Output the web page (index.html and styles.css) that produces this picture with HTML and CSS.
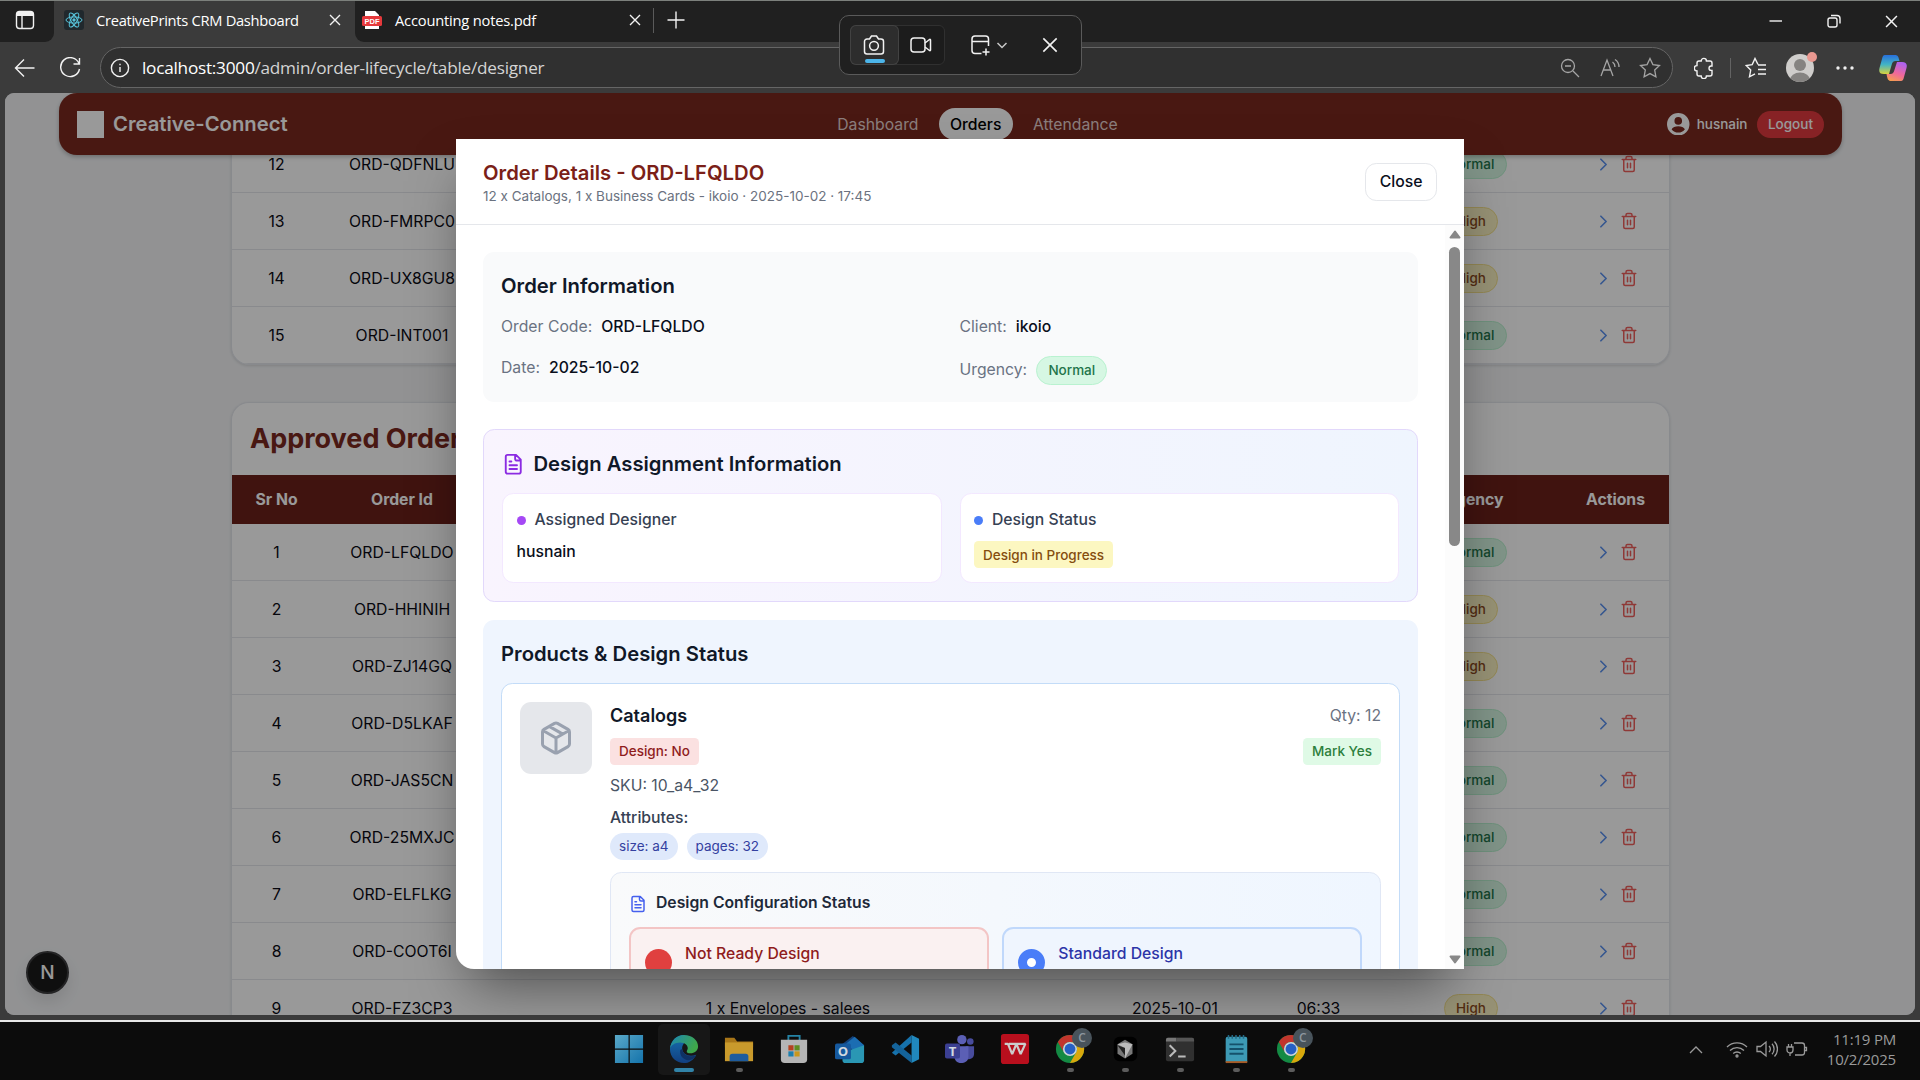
FILE: index.html
```html
<!DOCTYPE html>
<html lang="en">
<head>
<meta charset="utf-8">
<title>CreativePrints CRM Dashboard</title>
<link rel="stylesheet" href="styles.css">
</head>
<body>
<svg class="defs" aria-hidden="true">
  <symbol id="chevron" viewBox="0 0 24 24"><path d="m9 18 6-6-6-6"/></symbol>
  <symbol id="trash" viewBox="0 0 24 24"><path d="M3 6h18M19 6v14a2 2 0 0 1-2 2H7a2 2 0 0 1-2-2V6M8 6V4a2 2 0 0 1 2-2h4a2 2 0 0 1 2 2v2M10 11v6M14 11v6"/></symbol>
  <symbol id="file" viewBox="0 0 24 24"><path d="M15 2H6a2 2 0 0 0-2 2v16a2 2 0 0 0 2 2h12a2 2 0 0 0 2-2V7ZM14 2v4a2 2 0 0 0 2 2h4M10 9H8M16 13H8M16 17H8"/></symbol>
  <symbol id="cross" viewBox="0 0 12 12"><path d="M1 1l10 10M11 1 1 11"/></symbol>
  <symbol id="chrome" viewBox="0 0 32 32">
    <circle cx="16" cy="16" r="15" fill="#148a44"/>
    <path d="M3 8.5A15 15 0 0 1 29 8.5H16a7.500 7.500 0 0 0-6.500 11.200Z" fill="#c2352c"/>
    <path d="M29 8.500A15 15 0 0 1 16 31l6.500-11.300A7.500 7.500 0 0 0 16 8.500Z" fill="#d9a80c"/>
    <circle cx="16" cy="16" r="7.500" fill="#cfd4da"/><circle cx="16" cy="16" r="5.800" fill="#2560c4"/>
  </symbol>
</svg>

<header class="tabs">
  <div class="tabs-start"><svg class="line" width="20" height="20" viewBox="0 0 20 20"><rect x="1.500" y="1.500" width="17" height="17" rx="3"/><path d="M2 4h16" stroke-width="4"/><path d="M7 5v13"/></svg></div>
  <div class="tab active">
    <svg width="20" height="20" viewBox="0 0 20 20" fill="none" stroke="#58c4dc"><rect width="20" height="20" rx="3" fill="#20282d" stroke="none"/><ellipse cx="10" cy="10" rx="8" ry="3.100"/><ellipse cx="10" cy="10" rx="8" ry="3.100" transform="rotate(60 10 10)"/><ellipse cx="10" cy="10" rx="8" ry="3.100" transform="rotate(120 10 10)"/><circle cx="10" cy="10" r="1.200" fill="#58c4dc"/></svg>
    <span class="tab-title">CreativePrints CRM Dashboard</span>
    <svg class="line" width="12" height="12"><use href="#cross"/></svg>
  </div>
  <div class="tabs-rest">
    <svg width="20" height="20" viewBox="0 0 20 20"><path d="M3 1h10l4 4v14H3z" fill="#fff"/><rect y="6" width="20" height="10" rx="1.500" fill="#e5393c"/><text x="10" y="14" text-anchor="middle" class="pdf">PDF</text></svg>
    <span class="tab-title second">Accounting notes.pdf</span>
    <svg class="line" width="12" height="12"><use href="#cross"/></svg>
    <i class="tab-divider"></i>
    <svg class="line" width="18" height="18" viewBox="0 0 18 18"><path d="M9 0.500v17M.5 9h17"/></svg>
    <div class="window-controls">
      <svg class="line" width="14" height="14" viewBox="0 0 14 14"><path d="M.5 7h12.500"/></svg>
      <svg class="line" width="14" height="14" viewBox="0 0 14 14"><rect x="1" y="4" width="9" height="9" rx="2"/><path d="M4 1.500h6a3 3 0 0 1 3 3v5"/></svg>
      <svg class="line" width="13" height="13"><use href="#cross"/></svg>
    </div>
  </div>
</header>

<div class="toolbar">
  <svg class="line back" width="21" height="20" viewBox="0 0 21 20"><path d="M20.500 10H1.500M10 1.500 1.500 10l8.500 8.500"/></svg>
  <svg class="line reload" width="22" height="22" viewBox="0 0 22 22"><path d="M20 6.500A9.500 9.500 0 1 0 20.500 12M20.500 1v6h-6"/></svg>
  <div class="address">
    <svg class="line info" width="20" height="20" viewBox="0 0 20 20"><circle cx="10" cy="10" r="8.600"/><path d="M10 9v5M10 5.800v1.400"/></svg>
    <span class="url">localhost:3000<span class="path">/admin/order-lifecycle/table/designer</span></span>
    <div class="address-icons">
      <svg width="20" height="20" viewBox="0 0 20 20"><circle cx="8" cy="8" r="6.500"/><path d="M5 8h6M13 13l6 6"/></svg>
      <svg width="20" height="20" viewBox="0 0 20 20"><path d="M1 18 7 2l6 16M3.300 12h7.500M12.500 4a6 6 0 0 1 2.500 5M15 1.500a9 9 0 0 1 4 7.500"/></svg>
      <svg width="22" height="22" viewBox="0 0 22 22"><path d="m11 1.500 2.900 6.100 6.600.9-4.800 4.600 1.200 6.700L11 16.600l-5.900 3.200 1.200-6.700L1.500 8.500l6.600-.9Z"/></svg>
    </div>
  </div>
  <div class="toolbar-icons">
    <svg class="line" width="20" height="22" viewBox="0 0 20 22"><path d="M5 4h2.200a2.600 2.600 0 0 1 5.200 0H16a2 2 0 0 1 2 2v3h-.8a2.200 2.200 0 0 0 0 4.400h.8v3.600a2 2 0 0 1-2 2h-3.600a2.600 2.600 0 0 1-5.200 0H5a2 2 0 0 1-2-2v-3a2.700 2.700 0 0 1 0-5.400V6a2 2 0 0 1 2-2Z"/></svg>
    <i class="tool-divider"></i>
    <svg class="line" width="22" height="22" viewBox="0 0 22 22"><path d="M13 7.500 10 1.500 7.200 7.600l-6 .9 4.500 4.600-1.200 6.700 5.500-3M13 8h8M13 12.500h8M13 17h8"/></svg>
    <span class="avatar"><svg width="28" height="28" viewBox="0 0 28 28"><defs><clipPath id="av"><circle cx="14" cy="14" r="14"/></clipPath></defs><g clip-path="url(#av)"><path d="M0 0h28v28H0z" fill="#cfcdcb"/><circle cx="14" cy="11" r="6" fill="#858381"/><ellipse cx="14" cy="26" rx="10" ry="7.500" fill="#858381"/></g></svg><i></i></span>
    <svg class="dots" width="18" height="4" viewBox="0 0 18 4"><circle cx="2" cy="2" r="1.700"/><circle cx="9" cy="2" r="1.700"/><circle cx="16" cy="2" r="1.700"/></svg>
    <svg class="copilot" width="28" height="28" viewBox="0 0 28 28">
      <defs><linearGradient id="c1" x1="0" y1="0" x2="0" y2="1"><stop offset="0" stop-color="#2870dc"/><stop offset=".5" stop-color="#42b4c4"/><stop offset="1" stop-color="#d9d23c"/></linearGradient><linearGradient id="c2" x1="0.600" y1="0" x2="0.200" y2="1"><stop offset="0" stop-color="#ae62ee"/><stop offset=".55" stop-color="#f0689a"/><stop offset="1" stop-color="#f5a04c"/></linearGradient></defs>
      <path d="M6 1h10c3 0 3.500 2 4.500 6h-4c-2 0-3 1-3.600 3L10 20H5c-4 0-5.500-2-4.500-6L3 5c.6-2.400 1.200-4 3-4Z" fill="url(#c1)"/>
      <path d="M22 27H12c-3 0-3.500-2-4.500-7h4c2 0 3-1 3.600-3L18 8h5c4 0 5.500 2 4.500 6L25 23c-.6 2.400-1.200 4-3 4Z" fill="url(#c2)"/>
    </svg>
  </div>
</div>

<main class="viewport">
  <nav class="navbar">
    <div class="brand"><i></i>Creative-Connect</div>
    <div class="links"><a>Dashboard</a><a class="current">Orders</a><a>Attendance</a></div>
    <div class="account">
      <svg width="22.500" height="22.500" viewBox="0 0 22 22"><path fill="#fff" fill-rule="evenodd" d="M11 0a11 11 0 1 1 0 22 11 11 0 0 1 0-22Zm0 4a3.700 3.700 0 1 0 0 7.400A3.700 3.700 0 0 0 11 4Zm0 9c-3 0-5.500 1.200-6.500 2.800a8 8 0 0 0 13 0C16.500 14.200 14 13 11 13Z"/></svg>
      <span>husnain</span><b>Logout</b>
    </div>
  </nav>

  <section class="panel upper">
    <div class="row"><span>12</span><span>ORD-QDFNLU</span><span></span><span></span><span></span><span><em class="badge normal">Normal</em></span><span class="actions"><svg class="go"><use href="#chevron"/></svg><svg class="del"><use href="#trash"/></svg></span></div>
    <div class="row"><span>13</span><span>ORD-FMRPC0</span><span></span><span></span><span></span><span><em class="badge high">High</em></span><span class="actions"><svg class="go"><use href="#chevron"/></svg><svg class="del"><use href="#trash"/></svg></span></div>
    <div class="row"><span>14</span><span>ORD-UX8GU8</span><span></span><span></span><span></span><span><em class="badge high">High</em></span><span class="actions"><svg class="go"><use href="#chevron"/></svg><svg class="del"><use href="#trash"/></svg></span></div>
    <div class="row"><span>15</span><span>ORD-INT001</span><span></span><span></span><span></span><span><em class="badge normal">Normal</em></span><span class="actions"><svg class="go"><use href="#chevron"/></svg><svg class="del"><use href="#trash"/></svg></span></div>
  </section>

  <section class="panel lower">
    <h2>Approved Orders</h2>
    <div class="row head"><span>Sr No</span><span>Order Id</span><span></span><span></span><span></span><span>Urgency</span><span>Actions</span></div>
    <div class="row"><span>1</span><span>ORD-LFQLDO</span><span></span><span></span><span></span><span><em class="badge normal">Normal</em></span><span class="actions"><svg class="go"><use href="#chevron"/></svg><svg class="del"><use href="#trash"/></svg></span></div>
    <div class="row"><span>2</span><span>ORD-HHINIH</span><span></span><span></span><span></span><span><em class="badge high">High</em></span><span class="actions"><svg class="go"><use href="#chevron"/></svg><svg class="del"><use href="#trash"/></svg></span></div>
    <div class="row"><span>3</span><span>ORD-ZJ14GQ</span><span></span><span></span><span></span><span><em class="badge high">High</em></span><span class="actions"><svg class="go"><use href="#chevron"/></svg><svg class="del"><use href="#trash"/></svg></span></div>
    <div class="row"><span>4</span><span>ORD-D5LKAF</span><span></span><span></span><span></span><span><em class="badge normal">Normal</em></span><span class="actions"><svg class="go"><use href="#chevron"/></svg><svg class="del"><use href="#trash"/></svg></span></div>
    <div class="row"><span>5</span><span>ORD-JAS5CN</span><span></span><span></span><span></span><span><em class="badge normal">Normal</em></span><span class="actions"><svg class="go"><use href="#chevron"/></svg><svg class="del"><use href="#trash"/></svg></span></div>
    <div class="row"><span>6</span><span>ORD-25MXJC</span><span></span><span></span><span></span><span><em class="badge normal">Normal</em></span><span class="actions"><svg class="go"><use href="#chevron"/></svg><svg class="del"><use href="#trash"/></svg></span></div>
    <div class="row"><span>7</span><span>ORD-ELFLKG</span><span></span><span></span><span></span><span><em class="badge normal">Normal</em></span><span class="actions"><svg class="go"><use href="#chevron"/></svg><svg class="del"><use href="#trash"/></svg></span></div>
    <div class="row"><span>8</span><span>ORD-COOT6I</span><span></span><span></span><span></span><span><em class="badge normal">Normal</em></span><span class="actions"><svg class="go"><use href="#chevron"/></svg><svg class="del"><use href="#trash"/></svg></span></div>
    <div class="row"><span>9</span><span>ORD-FZ3CP3</span><span>1 x Envelopes - salees</span><span>2025-10-01</span><span>06:33</span><span><em class="badge high">High</em></span><span class="actions"><svg class="go"><use href="#chevron"/></svg><svg class="del"><use href="#trash"/></svg></span></div>
  </section>

  <div class="overlay">
    <div class="modal">
      <div class="modal-head">
        <div><h3>Order Details - ORD-LFQLDO</h3><p>12 x Catalogs, 1 x Business Cards - ikoio · 2025-10-02 · 17:45</p></div>
        <button>Close</button>
      </div>
      <div class="modal-main">
        <div class="modal-body">
          <section class="card info-card">
            <h4>Order Information</h4>
            <div class="two-col">
              <div class="field"><span>Order Code:</span><b>ORD-LFQLDO</b></div>
              <div class="field"><span>Client:</span><b>ikoio</b></div>
              <div class="field"><span>Date:</span><b>2025-10-02</b></div>
              <div class="field urgency"><span>Urgency:</span><em class="badge normal">Normal</em></div>
            </div>
          </section>
          <section class="card assign-card">
            <h4><svg class="file"><use href="#file"/></svg>Design Assignment Information</h4>
            <div class="two-col">
              <div class="tile"><div class="tile-label"><i class="purple"></i>Assigned Designer</div><b>husnain</b></div>
              <div class="tile"><div class="tile-label"><i class="blue"></i>Design Status</div><em class="tag yellow">Design in Progress</em></div>
            </div>
          </section>
          <section class="card product-card">
            <h4>Products &amp; Design Status</h4>
            <div class="product">
              <div class="thumb"><svg viewBox="0 0 24 24"><path d="M11 21.730a2 2 0 0 0 2 0l7-4A2 2 0 0 0 21 16V8a2 2 0 0 0-1-1.730l-7-4a2 2 0 0 0-2 0l-7 4A2 2 0 0 0 3 8v8a2 2 0 0 0 1 1.730ZM12 22V12M3.300 7 12 12l8.700-5M7.500 4.270l9 5.150"/></svg></div>
              <div class="details">
                <div class="between"><strong>Catalogs</strong><span class="qty">Qty: 12</span></div>
                <div class="between tags"><em class="tag red">Design: No</em><em class="tag green">Mark Yes</em></div>
                <div class="sku">SKU: 10_a4_32</div>
                <div class="attr">Attributes:</div>
                <div class="chips"><span>size: a4</span><span>pages: 32</span></div>
                <div class="config">
                  <h5><svg class="file"><use href="#file"/></svg>Design Configuration Status</h5>
                  <div class="options">
                    <div class="option not-ready"><i></i>Not Ready Design</div>
                    <div class="option standard"><i></i>Standard Design</div>
                  </div>
                </div>
              </div>
            </div>
          </section>
        </div>
        <div class="scrollbar">
          <svg width="12" height="9" viewBox="0 0 12 9"><path d="M6 1.500 10.500 7.500h-9Z"/></svg>
          <i></i>
          <svg class="down" width="12" height="9" viewBox="0 0 12 9"><path d="M6 7.500 1.500 1.500h9Z"/></svg>
        </div>
      </div>
    </div>
  </div>
  <div class="dev-badge">N</div>
</main>

<div class="window-edge"></div>

<footer class="taskbar">
  <div class="apps">
    <div class="app"><svg viewBox="0 0 32 32"><defs><linearGradient id="w" x2="1" y2="1"><stop stop-color="#5aa9c9"/><stop offset="1" stop-color="#1473ab"/></linearGradient></defs><path fill="url(#w)" d="M1 1h14.500v14.500H1zM16.800 1H31v14.500H16.800zM1 16.800h14.500V31H1zM16.800 16.800H31V31H16.800z"/></svg></div>
    <div class="app focused"><svg viewBox="0 0 32 32"><defs><linearGradient id="e1" x2="1" y2=".4"><stop stop-color="#1b86b8"/><stop offset="1" stop-color="#3fa84a"/></linearGradient><linearGradient id="e2" y1="0" y2="1" x2="0"><stop stop-color="#1671b0"/><stop offset="1" stop-color="#123f80"/></linearGradient></defs><path fill="url(#e2)" d="M1 16C2 7 8 1 16 1c4 7-2 9-2 14 0 7 8 10 15 7-3 6-8 9-13 9C8 31 1 25 1 16Z"/><path fill="url(#e1)" d="M1 16C2 6 9 1 16 1c9 0 15 6 15 12 0 5-4 7.500-8 7.500-3 0-4.500-1-4-2.500.5-1 1-1.500 1-3 0-3-3-6-8-6-6 0-10 3-11 7Z"/><path fill="#0f3163" d="M12 17c-1 6 3 10 8 11 4 .5 7-2 9-5-7 2-14 0-15-7Z"/></svg></div>
    <div class="app open"><svg viewBox="0 0 32 32"><path fill="#a87618" d="M1 4h10l3 4h17v6H1z"/><path fill="#c99a2c" d="M1 9h30v20H1z"/><path fill="#1e5c9e" d="M6 29v-5a3 3 0 0 1 3-3h14a3 3 0 0 1 3 3v5z"/></svg></div>
    <div class="app"><svg viewBox="0 0 32 32"><path d="M10 7V2h12v5" fill="none" stroke="#2483a5" stroke-width="2"/><path fill="#b5b5b5" d="M2 6h28v21a4 4 0 0 1-4 4H6a4 4 0 0 1-4-4z"/><path fill="#b5421f" d="M10 12h5.500v5.500H10z"/><path fill="#5f8d20" d="M16.500 12H22v5.500h-5.500z"/><path fill="#1c7fae" d="M10 18.500h5.500V24H10z"/><path fill="#c9971c" d="M16.500 18.500H22V24h-5.500z"/></svg></div>
    <div class="app"><svg viewBox="0 0 32 32"><path fill="#123f78" d="M6 12 19 2l12 10v8H6z"/><path fill="#1b6db2" d="m12 10 9-7 10 9-9 8z"/><path fill="#2a97b4" d="M8 20 31 12v16a3 3 0 0 1-3 3H11a3 3 0 0 1-3-3z"/><rect y="10" width="17" height="17" rx="2" fill="#16599e"/><text x="8.500" y="23.500" text-anchor="middle" class="app-letter">O</text></svg></div>
    <div class="app"><svg viewBox="0 0 32 32"><path fill="#1672ac" d="M23 1v8L6 23l-4-3 2-2Z"/><path fill="#14639a" d="m2 12 4-3 17 14v8L2 14Z"/><path fill="#2088bd" d="m23 1 8 4v22l-8 4Z"/></svg></div>
    <div class="app"><svg viewBox="0 0 32 32"><circle cx="18" cy="6" r="5" fill="#5b5fb5"/><circle cx="27" cy="8" r="3.500" fill="#484c9d"/><path fill="#484c9d" d="M22 13h9v8c0 4-3 6-7 6z"/><path fill="#5b5fb5" d="M10 13h15v11c0 5-4 7-8 7s-7-3-7-7z"/><rect y="10" width="16" height="16" rx="2" fill="#3b3f92"/><text x="8" y="23" text-anchor="middle" class="app-letter">T</text></svg></div>
    <div class="app"><svg viewBox="0 0 32 32"><rect x="1" width="30" height="32" rx="3" fill="#b80f1d"/><path d="M5 10.500h3.500l4.500 11 4.500-11 4.500 11 5-11H15M9.500 10.500h6" fill="none" stroke="#ccc" stroke-width="2.400" stroke-linejoin="bevel"/></svg></div>
    <div class="app open"><svg viewBox="0 0 32 32"><use href="#chrome"/></svg><i class="profile">C</i></div>
    <div class="app open"><svg viewBox="0 0 32 32"><rect x="4" y="3" width="25" height="26" rx="6" fill="#000"/><path fill="#777" d="m16 6 8 5v10l-8 5-8-5V11Z"/><path fill="#bbb" d="m8 11 8-2 8 2-8 15v-11Z"/><path fill="#222" d="m8 12 8 3v8Z"/></svg></div>
    <div class="app open"><svg viewBox="0 0 32 32"><rect x="1" y="4" width="30" height="25" rx="2" fill="#303030"/><path fill="#777" d="M1 8V6a2 2 0 0 1 2-2h9v4z"/><path fill="#555" d="M12 4h17a2 2 0 0 1 2 2v2H12z"/><path d="m5 12 6 6-6 6M14 24h8" fill="none" stroke="#bbb" stroke-width="2.200"/></svg></div>
    <div class="app open"><svg viewBox="0 0 32 32"><rect x="5" y="3" width="23" height="28" rx="2" fill="#3d9ab5"/><path fill="#a85b25" d="M5 29h23v2H5z"/><path d="M8 1v4M12 1v4M16 1v4M20 1v4M24 1v4" stroke="#236a86" stroke-width="1.600"/><path d="M9 11h15M9 16h15M9 21h15" stroke="#15516b" stroke-width="2"/></svg></div>
    <div class="app open"><svg viewBox="0 0 32 32"><use href="#chrome"/></svg><i class="profile">C</i></div>
  </div>
  <div class="tray">
    <svg width="14" height="9" viewBox="0 0 14 9"><path d="m1 8 6-6 6 6"/></svg>
    <svg class="wifi" width="22" height="18" viewBox="0 0 22 18"><path d="M1 7a14 14 0 0 1 20 0M4 10.500a10 10 0 0 1 14 0M7.200 13.500a5.500 5.500 0 0 1 7.600 0"/><circle cx="11" cy="16" r="1"/></svg>
    <svg class="volume" width="22" height="18" viewBox="0 0 22 18"><path d="M1 6.500h3.500L10 2v14l-5.500-4.500H1ZM13 6a4 4 0 0 1 0 6M16 3.800a7.500 7.500 0 0 1 0 10.400M18.500 1.500a11 11 0 0 1 0 15"/></svg>
    <svg class="battery" width="22" height="18" viewBox="0 0 22 18"><path d="M8 3H16a2.500 2.500 0 0 1 2.500 2.500v7A2.500 2.500 0 0 1 16 15H9M18.500 7.500h2v3h-2M1 7h6v3a3 3 0 0 1-6 0ZM2.500 4v3M5.500 4v3M4 13v3"/></svg>
    <div class="clock"><span>11:19 PM</span><span>10/2/2025</span></div>
  </div>
</footer>

<div class="snip">
  <div class="snip-modes">
    <div class="mode on"><svg width="22" height="22" viewBox="0 0 22 22"><path d="M7.500 3.500 8.500 2h5l1 1.500L15.500 5H18a2.500 2.500 0 0 1 2.500 2.500v10A2.500 2.500 0 0 1 18 20H4a2.500 2.500 0 0 1-2.500-2.500v-10A2.500 2.500 0 0 1 4 5h2.500Z"/><circle cx="11" cy="11.800" r="4.400"/></svg></div>
    <div class="mode"><svg width="22" height="22" viewBox="0 0 22 22"><rect x="1" y="4" width="14" height="14" rx="3"/><path d="m15 9 4.500-3.500c.5-.4 1-.1 1 .5v10c0 .6-.5.900-1 .5L15 13"/></svg></div>
  </div>
  <svg class="shape" width="22" height="22" viewBox="0 0 22 22"><path d="M18.500 12V5a3 3 0 0 0-3-3H5a3 3 0 0 0-3 3v11.500a3 3 0 0 0 3 3h6.500M2 7.500h16.500M16 14.500v7M12.500 18h7"/></svg>
  <svg class="caret" width="12" height="12" viewBox="0 0 12 12"><path d="m1.500 4 4.500 4.500L10.500 4"/></svg>
  <svg class="exit" width="16" height="16"><use href="#cross"/></svg>
</div>
</body>
</html>
```
FILE: styles.css
```css
/* App sizes are rem based: 1rem = 18px (browser zoom of 112.5%). */
html { font-size: 18px; }
* { box-sizing: border-box; }
body {
  margin: 0; width: 1920px; height: 1080px; overflow: hidden; position: relative;
  display: flex; flex-direction: column; background: #3b3b3b; color: #fff;
  font-family: "Open Sans", "Noto Sans", sans-serif;
}
h2, h3, h4, h5, p { margin: 0; }
em, i { font-style: normal; }
svg { display: block; flex: none; }
.defs { position: absolute; width: 0; height: 0; }
.line { fill: none; stroke: #f2f2f2; stroke-width: 1.4; }

/* Browser tabs */
.tabs { display: flex; height: 42px; border-top: 1px solid #7c807c; flex: none; }
.tabs-start { width: 54px; background: #202020; border-bottom-right-radius: 9px; padding: 9px 0 0 15px; }
.tab { display: flex; align-items: center; width: 301px; padding: 0 14px 3px 10px; }
.tab-title { font-size: 14.7px; line-height: 20px; margin-left: 12px; flex: 1; letter-spacing: -0.29px; white-space: nowrap; }
.tabs-rest { flex: 1; display: flex; align-items: center; background: #202020; border-bottom-left-radius: 9px; padding: 0 22px 3px 7px; }
.tab-title.second { flex: none; width: 234px; margin-left: 13px; letter-spacing: -0.2px; }
.pdf { font: 700 7.500px "Liberation Sans", sans-serif; fill: #fff; }
.tab-divider { width: 1px; height: 25px; background: #5a5a5a; margin: 0 13px 0 12px; }
.window-controls { margin-left: auto; display: flex; align-items: center; gap: 44px; padding-top: 2px; }

/* Browser toolbar */
.toolbar { height: 51px; flex: none; display: flex; align-items: center; padding: 0 13px 0 14px; }
.reload { margin-left: 24px; }
.address { display: flex; align-items: center; width: 1573px; height: 41px; margin-left: 19px; border: 1.500px solid #656565; border-radius: 21px; background: #303030; padding: 0 11px 0 9px; }
.url { font-size: 17.200px; line-height: 24px; margin-left: 12px; letter-spacing: -0.24px; white-space: nowrap; }
.path { color: #d4d4d4; }
.address-icons { margin-left: auto; display: flex; align-items: center; gap: 19.500px; fill: none; stroke: #a5a5a5; stroke-width: 1.300; }
.toolbar-icons { display: flex; align-items: center; margin-left: 21px; flex: 1; }
.tool-divider { width: 1px; height: 20px; background: #636363; margin: 0 14px 0 16px; }
.avatar { position: relative; margin-left: 19px; }
.avatar i { position: absolute; right: -3px; top: -2px; width: 10px; height: 10px; border-radius: 50%; background: #e99890; }
.dots { fill: #f0f0f0; margin-left: 22px; }
.copilot { margin-left: auto; }

/* Page */
.viewport {
  position: relative; width: 1910px; height: 922px; flex: none; margin-left: 5px; overflow: hidden;
  border-radius: 9px; background: #f3f4f6; color: #0a0a14; font: 400 0.875rem/1.25rem Inter, sans-serif;
}
.navbar {
  position: relative; z-index: 1; display: flex; align-items: center; width: 1783px; height: 62px; margin-left: 54px;
  padding: 0 1rem; border-radius: 1rem; background: #7b281e; color: #fff; box-shadow: 0 2px 4px rgba(0,0,0,.25);
}
.brand { display: flex; align-items: center; gap: 9px; font-size: 1.125rem; font-weight: 600; width: 749px; }
.brand i { width: 1.5rem; height: 1.5rem; background: #fff; }
.links { display: flex; gap: 0.5rem; }
.links a { padding: 5.500px 0.625rem 3.500px; border-radius: 1rem; color: #e6d2d0; }
.links a.current { background: #fff; color: #000; font-weight: 500; }
.account { margin-left: auto; display: flex; align-items: center; font-size: 0.75rem; font-weight: 500; }
.account span { margin: 0 9.500px 0 7px; }
.account b { background: #e23a3f; color: #fff; font-weight: 500; line-height: 27px; border-radius: 14px; padding: 0 11px; }
.panel { width: 1439px; margin-left: 226px; border: 1px solid #e3e6ec; background: #fff; box-shadow: 0 1px 3px rgba(0,0,0,.12); overflow: hidden; }
.panel.upper { margin-top: -19px; border-top: 0; border-radius: 0 0 1rem 1rem; }
.panel.lower { margin-top: 37px; border-bottom: 0; border-radius: 1rem 1rem 0 0; }
.panel h2 { height: 72px; line-height: 72px; padding-left: 18px; font-size: 1.5rem; font-weight: 700; color: #7b281e; }
.row { display: grid; grid-template-columns: 89px 162px 610px 164px 123px 182px 107px; align-items: center; height: 57px; border-bottom: 1px solid #e5e7eb; text-align: center; }
.row span { display: flex; justify-content: center; }
.row span:nth-child(-n+5), .row.head span { padding-top: 2px; }
.row.head { height: 49px; border: 0; background: #6b211a; color: #fff; font-weight: 700; }
.badge { padding: 0.25rem 0.625rem; border: 1px solid #b9f2d0; border-radius: 1rem; background: #d6f7e3; color: #22744a; font-size: 0.75rem; font-weight: 500; line-height: 1rem; }
.badge.high { background: #fcf3c4; border-color: #f5e28c; color: #8a4a1c; }
.actions { gap: 6.500px; align-items: center; }
.actions svg { width: 1rem; height: 1rem; fill: none; stroke-width: 2; stroke: #ee605d; stroke-linecap: round; stroke-linejoin: round; }
.actions .go { width: 21px; height: 21px; stroke: #5a90ee; stroke-width: 1.900; }
.dev-badge {
  position: absolute; left: 21px; bottom: 21px; width: 43px; height: 43px; border-radius: 50%;
  background: #1a1a1a; border: 2px solid #3c3c3e; color: #fff; font-size: 19px; font-weight: 500; line-height: 39px; text-align: center;
  box-shadow: 0 8px 16px rgba(0,0,0,.1);
}

/* Order modal */
.overlay { position: absolute; inset: 0; z-index: 2; background: rgba(0,0,0,.4); display: flex; align-items: center; justify-content: center; }
.modal { width: 56rem; height: 90%; display: flex; flex-direction: column; background: #fff; border-radius: 0 0 0 1rem; overflow: hidden; box-shadow: 0 28px 56px -14px rgba(0,0,0,.5); }
.modal-head { display: flex; align-items: center; justify-content: space-between; height: 86px; padding: 0 1.5rem; border-bottom: 1px solid #e5e7eb; }
.modal-head h3 { font-size: 1.125rem; line-height: 1.75rem; font-weight: 600; color: #7b1f18; }
.modal-head p { margin: -2px 0 1px; font-size: 0.75rem; line-height: 1rem; color: #6b7280; }
.modal-head button { font: 500 0.875rem/1.25rem Inter, sans-serif; color: #0a0f20; background: #fff; border: 1px solid #e5e7eb; border-radius: 0.625rem; padding: 7.750px 0.75rem 5.750px; }
.modal-main { flex: 1; min-height: 0; display: flex; }
.modal-body { flex: 1; padding: 1.5rem; }
.card { border-radius: 0.625rem; padding: 1rem; }
.card h4 { display: flex; align-items: center; font-size: 1.125rem; line-height: 1.75rem; font-weight: 600; color: #101828; margin-bottom: 0.75rem; }
.card b { font-weight: 500; color: #0a0f1c; }
.two-col { display: grid; grid-template-columns: 1fr 1fr; gap: 1rem; }
.info-card { background: #f9fafb; height: 150px; margin-bottom: 1.5rem; }
.field { display: flex; align-items: center; gap: 0.5rem; height: 22.500px; padding-top: 2px; color: #6a7282; }
.field.urgency { height: 29px; padding: 0; }
.assign-card { border: 1px solid #e2d8fb; background: linear-gradient(90deg, #f9f4fe, #eff5fe); margin-bottom: 1rem; }
.file { width: 1.25rem; height: 1.25rem; margin-right: 0.5rem; fill: none; stroke: #8b2be2; stroke-width: 2; stroke-linecap: round; stroke-linejoin: round; }
.tile { height: 89.500px; background: #fff; border: 1px solid #f3e8ff; border-radius: 0.625rem; padding: 14.700px 0.75rem 0; }
.tile-label { display: flex; align-items: center; gap: 0.5rem; margin-bottom: 9.500px; color: #364153; font-weight: 500; }
.tile-label i { width: 0.5rem; height: 0.5rem; border-radius: 50%; background: #a548f5; }
.tile-label .blue { background: #4a7df8; }
.tag { display: block; width: max-content; border-radius: 0.25rem; padding: 0.25rem 0.5rem; font-size: 0.75rem; line-height: 1rem; font-weight: 500; }
.tag.yellow { background: #fcf7c1; color: #854d0e; margin-top: 9.800px; }
.tag.red { background: #fbe1e1; color: #8f1c1c; }
.tag.green { background: #dffae6; color: #2c7f3c; }
.product-card { background: #eff5fe; border-radius: 0.625rem 0.625rem 0 0; }
.product { display: flex; gap: 1rem; height: 400px; padding: 1rem; background: #fff; border: 1px solid #c3dcf8; border-radius: 0.625rem; }
.thumb { width: 4rem; height: 4rem; border-radius: 0.625rem; background: #e5e7eb; display: flex; align-items: center; justify-content: center; flex: none; }
.thumb svg { width: 2rem; height: 2rem; fill: none; stroke: #99a1af; stroke-width: 2; stroke-linecap: round; stroke-linejoin: round; }
.details { flex: 1; }
.between { display: flex; justify-content: space-between; align-items: center; }
.between strong { font-size: 1rem; line-height: 1.5rem; font-weight: 600; color: #101828; }
.qty { color: #6a7282; padding-top: 2px; }
.tags { margin: 0.5rem 0; height: 27px; }
.sku { color: #4a5565; padding-top: 1.500px; }
.attr { color: #364153; font-weight: 500; margin: 0.5rem 0 3.500px; }
.chips { display: flex; gap: 0.5rem; }
.chips span { background: #dfe9fb; color: #3440a0; font-size: 0.75rem; line-height: 1rem; border-radius: 1rem; padding: 0.25rem 0.5rem; }
.config { height: 300px; margin-top: 12.700px; padding: 1rem; border: 1px solid #e0e7f5; border-radius: 0.625rem; background: linear-gradient(90deg, #f9fafb, #eff6ff); }
.config h5 { display: flex; align-items: center; height: 22.500px; padding-top: 2px; font-size: 0.875rem; line-height: 1.25rem; font-weight: 600; color: #1e2939; margin-bottom: 0.75rem; }
.config .file { width: 1rem; height: 1rem; stroke: #4560ee; }
.options { display: grid; grid-template-columns: 1fr 1fr; gap: 0.75rem; }
.option { display: flex; gap: 0.75rem; height: 120px; padding: 14px 0.75rem; border: 2px solid #f3c5c5; border-radius: 0.625rem; background: #faf1f1; color: #8f1c1c; font-weight: 500; }
.option i { width: 1.5rem; height: 1.5rem; margin-top: 6px; border-radius: 50%; background: #e0403f; }
.option.standard { border-color: #c0d8fb; background: #eff5fe; color: #2c34a8; }
.option.standard i { border: 9px solid #4a7df8; background: #fff; }
.scrollbar { width: 19px; background: #fcfcfc; display: flex; flex-direction: column; align-items: center; padding: 5px 0 5px; }
.scrollbar svg { fill: #888; stroke: #888; stroke-width: 2; stroke-linejoin: round; }
.scrollbar i { width: 11px; height: 299px; margin-top: 8px; border-radius: 6px; background: #888; }
.scrollbar .down { margin-top: auto; }

/* Bottom edge of the browser window */
.window-edge { height: 7px; flex: none; border-bottom: 2px solid #e8e8e8; background: #3b3b3b; }

/* Taskbar */
.taskbar { flex: 1; position: relative; background: #0c0c0c; display: flex; justify-content: flex-end; align-items: center; }
.apps { position: absolute; left: 603px; top: 2px; display: flex; gap: 3px; }
.app { position: relative; width: 52.150px; height: 51px; padding: 10px 0 0 11px; border-radius: 5px; }
.app > svg { width: 30px; height: 30px; }
.app.focused { background: #171717; }
.app.focused::after, .app.open::after { content: ""; position: absolute; left: 23px; bottom: 3px; width: 7px; height: 4px; border-radius: 2px; background: #5c5c5c; }
.app.focused::after { left: 16px; width: 20px; background: #3183a8; }
.app-letter { font: 700 14px "Open Sans", sans-serif; fill: #d0d8e0; }
.profile { position: absolute; left: 28px; top: 4px; width: 20px; height: 20px; border-radius: 50%; background: #48535b; color: #8d979f; font-size: 12px; font-weight: 600; line-height: 20px; text-align: center; }
.tray { display: flex; align-items: center; padding: 0 24px 4px 0; fill: none; stroke: #9a9a9a; stroke-width: 1.300; }
.wifi { margin-left: 23px; }
.volume { margin-left: 8px; }
.battery { margin-left: 8px; }
.clock { width: 88px; display: flex; flex-direction: column; align-items: flex-end; font-size: 15px; line-height: 20px; color: #9a9a9a; letter-spacing: -0.200px; }

/* Snipping toolbar floating above the windows */
.snip { position: absolute; z-index: 3; left: 839px; top: 15px; width: 243px; height: 60px; display: flex; align-items: center; padding: 0 23px 1px 10px; border: 1px solid #5a5a5a; border-radius: 10px; background: #202020; fill: none; stroke: #f2f2f2; stroke-width: 1.500; }
.snip-modes { display: flex; width: 95px; height: 40px; border: 1px solid #303030; border-radius: 6px; background: #1c1c1c; }
.mode { position: relative; width: 48px; display: flex; align-items: center; justify-content: center; }
.mode.on { background: #2d2d2d; border-radius: 5px; box-shadow: 0 0 0 1px #424242; }
.mode.on::after { content: ""; position: absolute; bottom: 1px; left: 14px; width: 20px; height: 4px; border-radius: 2px; background: #4cb5ea; }
.shape { margin-left: 25px; }
.caret { margin-left: 4px; stroke: #c8c8c8; }
.exit { margin-left: auto; stroke-width: 1.200; }
```
